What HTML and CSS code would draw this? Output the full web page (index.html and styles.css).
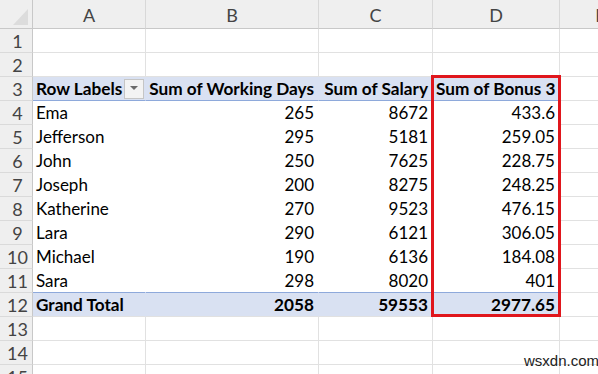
FILE: index.html
```html
<!DOCTYPE html>
<html>
<head>
<meta charset="utf-8">
<link rel="stylesheet" href="styles.css">
</head>
<body>
<div class="wrap">
  <div class="sheet">
    <div class="corner"><svg width="33" height="29" viewBox="0 0 33 29"><polygon points="13,25 28,25 28,9" fill="#dcdcdc"/></svg></div>
    <div class="ch">A</div><div class="ch">B</div><div class="ch">C</div><div class="ch">D</div><div class="ch">E</div>

    <div class="rh">1</div><div class="g"></div><div class="g"></div><div class="g"></div><div class="g"></div><div class="g"></div>
    <div class="rh">2</div><div class="g"></div><div class="g"></div><div class="g"></div><div class="g"></div><div class="g"></div>

    <div class="rh">3</div>
    <div class="ph"><span>Row Labels</span><span class="dd"><svg width="8" height="5" viewBox="0 0 8 5"><polygon points="0,0 8,0 4,4" fill="#6b6b6b"/></svg></span></div>
    <div class="ph num">Sum of Working Days</div>
    <div class="ph num">Sum of Salary</div>
    <div class="ph">Sum of Bonus 3</div>
    <div class="g"></div>

    <div class="rh">4</div><div class="pv">Ema</div><div class="pv num">265</div><div class="pv num">8672</div><div class="pv num">433.6</div><div class="g"></div>
    <div class="rh">5</div><div class="pv">Jefferson</div><div class="pv num">295</div><div class="pv num">5181</div><div class="pv num">259.05</div><div class="g"></div>
    <div class="rh">6</div><div class="pv">John</div><div class="pv num">250</div><div class="pv num">7625</div><div class="pv num">228.75</div><div class="g"></div>
    <div class="rh">7</div><div class="pv">Joseph</div><div class="pv num">200</div><div class="pv num">8275</div><div class="pv num">248.25</div><div class="g"></div>
    <div class="rh">8</div><div class="pv">Katherine</div><div class="pv num">270</div><div class="pv num">9523</div><div class="pv num">476.15</div><div class="g"></div>
    <div class="rh">9</div><div class="pv">Lara</div><div class="pv num">290</div><div class="pv num">6121</div><div class="pv num">306.05</div><div class="g"></div>
    <div class="rh">10</div><div class="pv">Michael</div><div class="pv num">190</div><div class="pv num">6136</div><div class="pv num">184.08</div><div class="g"></div>
    <div class="rh">11</div><div class="pv last">Sara</div><div class="pv last num">298</div><div class="pv last num">8020</div><div class="pv last num">401</div><div class="g"></div>

    <div class="rh">12</div><div class="pt">Grand Total</div><div class="pt num">2058</div><div class="pt num">59553</div><div class="pt num">2977.65</div><div class="g"></div>

    <div class="rh">13</div><div class="g"></div><div class="g"></div><div class="g"></div><div class="g"></div><div class="g"></div>
    <div class="rh">14</div><div class="g"></div><div class="g"></div><div class="g"></div><div class="g"></div><div class="g"></div>
    <div class="rh">15</div><div class="g"></div><div class="g"></div><div class="g"></div><div class="g"></div><div class="g"></div>
  </div>
  <div class="highlight"></div>
  <div class="mark">wsxdn.com</div>
</div>
</body>
</html>
```
FILE: styles.css
```css
html, body {
  margin: 0;
  padding: 0;
  background: #ffffff;
  overflow: hidden;
}
.wrap {
  position: relative;
  width: 598px;
  height: 374px;
  overflow: hidden;
  font-family: Lato, "Liberation Sans", sans-serif;
  font-size: 17px;
  color: #000;
}
.sheet {
  display: grid;
  width: 642px;
  grid-template-columns: 33px 113px 173px 114px 127px 82px;
  grid-template-rows: 29px repeat(15, 24px);
}
.sheet > div {
  box-sizing: border-box;
  white-space: nowrap;
  overflow: hidden;
}
.corner {
  background: #efefef;
  border-right: 1px solid #c8c8c8;
  border-bottom: 1px solid #c8c8c8;
}
.corner svg { display: block; }
.ch {
  background: #efefef;
  border-right: 1px solid #d8d8d8;
  border-bottom: 1px solid #c8c8c8;
  color: #444;
  font-size: 18px;
  text-align: center;
  line-height: 30px;
}
.rh {
  background: #efefef;
  border-right: 1px solid #c8c8c8;
  border-bottom: 1px solid #dadada;
  color: #444;
  font-size: 18px;
  text-align: center;
  padding-left: 3px;
  line-height: 24px;
}
.g {
  border-right: 1px solid #e1e1e1;
  border-bottom: 1px solid #e1e1e1;
}
.ph, .pv, .pt {
  padding: 0 4px 0 3px;
  line-height: 24px;
}
.ph {
  background: #d9e1f2;
  font-weight: bold;
  font-size: 17.2px;
  border-right: 1px solid #d9e1f2;
  border-bottom: 1px solid #8ea9db;
  display: flex;
  align-items: center;
  justify-content: space-between;
}
.ph.num { justify-content: flex-end; }
.dd {
  width: 20px;
  height: 20px;
  box-sizing: border-box;
  border: 1px solid #c5c5c5;
  background: #f3f3f3;
  display: flex;
  align-items: center;
  justify-content: center;
  margin-right: -3px;
}
.dd svg { display: block; }
.pv {
  background: #fff;
  border-right: 1px solid #fff;
  border-bottom: 1px solid #fff;
}
.pv.last { border-bottom: 1px solid #8ea9db; }
.pt {
  background: #d9e1f2;
  font-weight: bold;
  font-size: 17.2px;
  border-right: 1px solid #d9e1f2;
  border-bottom: 1px solid #e1e1e1;
}
.num { text-align: right; }
.highlight {
  position: absolute;
  left: 431px;
  top: 75px;
  width: 130px;
  height: 242px;
  box-sizing: border-box;
  border: 3px solid #e0161c;
}
.mark {
  position: absolute;
  left: 524px;
  top: 353px;
  line-height: 16px;
  font-family: "Liberation Sans", Arial, sans-serif;
  font-size: 15px;
  color: #222;
}
```
